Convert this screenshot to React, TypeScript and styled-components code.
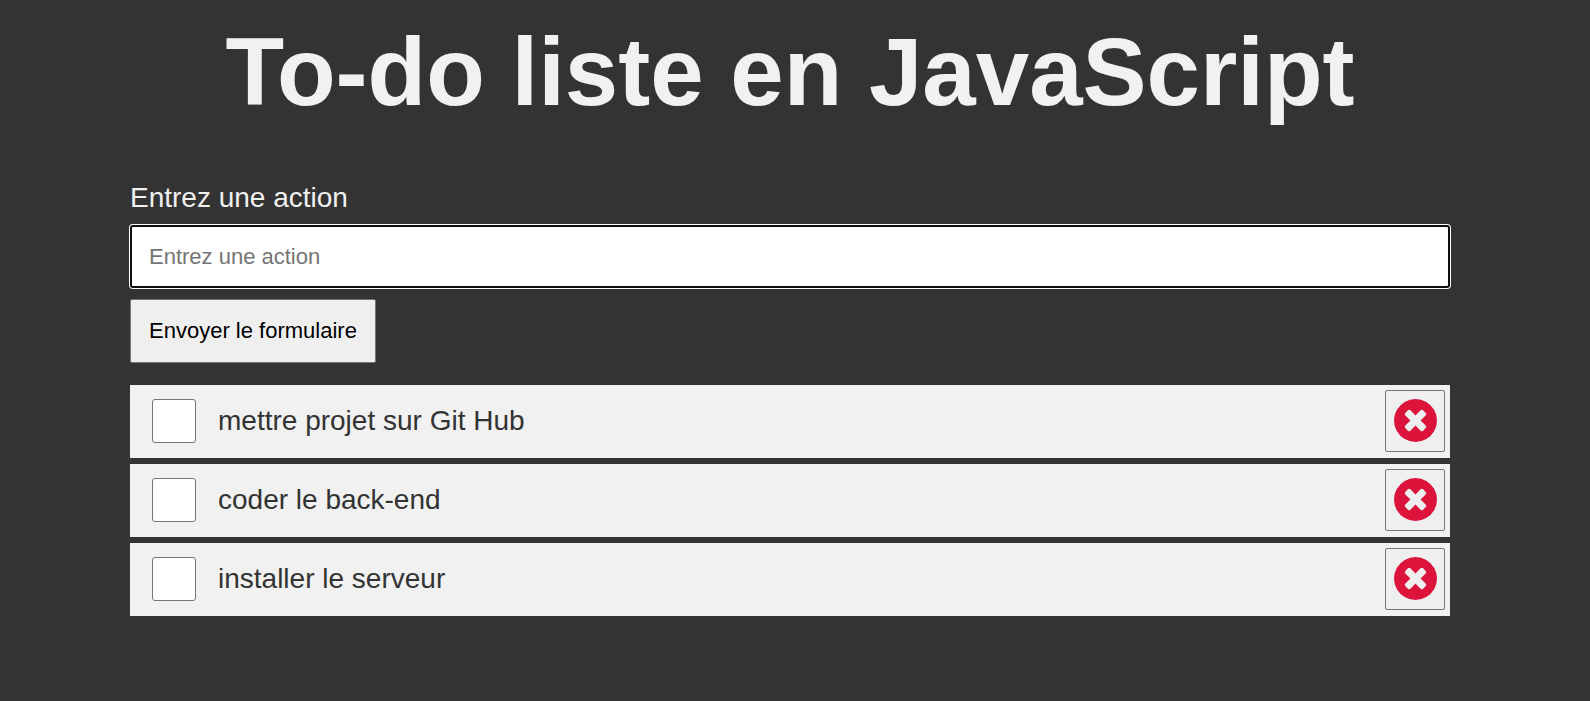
import React, { useState } from 'react';
import styled, { createGlobalStyle } from 'styled-components';

const GlobalStyle = createGlobalStyle`
  *, *::before, *::after { box-sizing: border-box; margin: 0; padding: 0; }
  body { background: #333; font-family: Arial, "Liberation Sans", sans-serif; }
`;
const Container = styled.main`
  padding: 14px 140px 0 130px;
`;
const Title = styled.h1`
  color: #f1f1f1;
  font-size: 96px;
  line-height: 115px;
  text-align: center;
  margin-bottom: 51px;
`;
const Form = styled.form`
  display: flex;
  flex-direction: column;
  align-items: flex-start;
  margin-bottom: 22px;
`;
const Label = styled.label`
  color: #f1f1f1;
  font-size: 28px;
  line-height: 36px;
  margin-bottom: 9px;
`;
const TextInput = styled.input`
  width: 100%;
  height: 63px;
  padding: 0 17px;
  border: 2px solid #101010;
  border-radius: 3px;
  outline: none;
  box-shadow: 0 0 0 1px #fff;
  font: 22px Arial, "Liberation Sans", sans-serif;
  background: #fff;
  margin-bottom: 11px;
  &::placeholder { color: #757575; }
`;
const Submit = styled.button`
  height: 64px;
  padding: 0 18px;
  border: 1px solid #767676;
  border-radius: 2px;
  background: #efefef;
  color: #000;
  font: 22px Arial, "Liberation Sans", sans-serif;
`;
const List = styled.ul`
  list-style: none;
  display: grid;
  gap: 6px;
`;
const Item = styled.li`
  display: flex;
  align-items: center;
  height: 73px;
  padding: 0 5px 1px 22px;
  background: #f1f1f1;
`;
const Check = styled.input`
  appearance: none;
  width: 44px;
  height: 44px;
  border: 1px solid #767676;
  border-radius: 3px;
  background: #fff;
  &:checked { background: #0075ff; }
`;
const Text = styled.label`
  flex: 1;
  margin-left: 22px;
  color: #333;
  font-size: 28px;
  line-height: 36px;
`;
const Remove = styled.button`
  display: flex;
  align-items: center;
  justify-content: center;
  width: 60px;
  height: 62px;
  padding-bottom: 2px;
  border: 1px solid #767676;
  border-radius: 2px;
  background: #efefef;
  color: crimson;
`;
const Icon = styled.svg`
  display: block;
  width: 43px;
  height: 43px;
  fill: currentColor;
`;

const CrossIcon = () => (
  <Icon viewBox="0 0 1536 1536" aria-hidden="true">
    <path d="M1149 994q0-26-19-45L949 768l181-181q19-19 19-45 0-27-19-46l-90-90q-19-19-46-19-26 0-45 19L768 587 587 406q-19-19-45-19-27 0-46 19l-90 90q-19 19-19 46 0 26 19 45l181 181-181 181q-19 19-19 45 0 27 19 46l90 90q19 19 46 19 26 0 45-19l181-181 181 181q19 19 45 19 27 0 46-19l90-90q19-19 19-46zm387-226q0 209-103 385.500T1153.500 1433 768 1536t-385.500-103T103 1153.500 0 768t103-385.500T382.500 103 768 0t385.500 103T1433 382.500 1536 768z" />
  </Icon>
);

export default function App() {
  const [todos, setTodos] = useState(['mettre projet sur Git Hub', 'coder le back-end', 'installer le serveur']);
  const [value, setValue] = useState('');
  const submit = (e: React.FormEvent) => {
    e.preventDefault();
    if (value.trim()) setTodos([...todos, value.trim()]);
    setValue('');
  };
  return (
    <Container>
      <GlobalStyle />
      <Title>To-do liste en JavaScript</Title>
      <Form onSubmit={submit}>
        <Label htmlFor="item">Entrez une action</Label>
        <TextInput id="item" type="text" placeholder="Entrez une action" value={value} onChange={(e) => setValue(e.target.value)} />
        <Submit type="submit">Envoyer le formulaire</Submit>
      </Form>
      <List>
        {todos.map((todo, i) => (
          <Item key={todo}>
            <Check type="checkbox" id={`todo-${i}`} />
            <Text htmlFor={`todo-${i}`}>{todo}</Text>
            <Remove type="button" aria-label="Supprimer" onClick={() => setTodos(todos.filter((t) => t !== todo))}>
              <CrossIcon />
            </Remove>
          </Item>
        ))}
      </List>
    </Container>
  );
}
